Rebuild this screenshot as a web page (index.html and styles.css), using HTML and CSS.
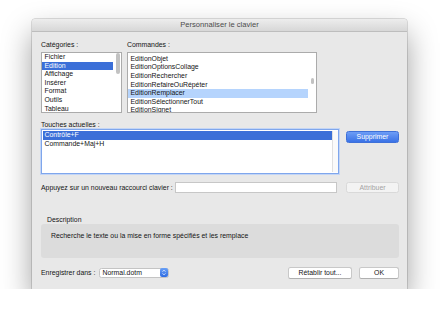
FILE: index.html
```html
<!DOCTYPE html>
<html lang="fr">
<head>
    <meta charset="UTF-8">
    <title>Personnaliser le clavier</title>
    <link rel="stylesheet" href="styles.css">
</head>
<body>
<div class="dialog">
    <div class="titlebar">Personnaliser le clavier</div>
    <div class="content">
        <div class="lists">
            <div class="col-cat">
                <div class="label">Catégories :</div>
                <div class="listbox">
                    <ul class="items">
                        <li>Fichier</li>
                        <li class="sel">Edition</li>
                        <li>Affichage</li>
                        <li>Insérer</li>
                        <li>Format</li>
                        <li>Outils</li>
                        <li>Tableau</li>
                    </ul>
                    <div class="track"><div class="thumb thumb-cat"></div></div>
                </div>
            </div>
            <div class="col-cmd">
                <div class="label">Commandes :</div>
                <div class="listbox">
                    <ul class="items items-cmd">
                        <li class="partial"><span>EditionLien</span></li>
                        <li>EditionObjet</li>
                        <li>EditionOptionsCollage</li>
                        <li>EditionRechercher</li>
                        <li>EditionRefaireOuRépéter</li>
                        <li class="hl">EditionRemplacer</li>
                        <li>EditionSélectionnerTout</li>
                        <li>EditionSignet</li>
                    </ul>
                    <div class="track"><div class="thumb thumb-cmd"></div></div>
                </div>
            </div>
        </div>

        <div class="label keys-label">Touches actuelles :</div>
        <div class="keys-row">
            <div class="keybox">
                <ul class="items">
                    <li class="sel">Contrôle+F</li>
                    <li>Commande+Maj+H</li>
                </ul>
                <div class="keytrack"></div>
            </div>
            <button class="btn btn-primary btn-side">Supprimer</button>
        </div>

        <div class="shortcut-row">
            <div class="shortcut-label">Appuyez sur un nouveau raccourci clavier :</div>
            <input class="field" type="text">
            <button class="btn btn-disabled btn-attr">Attribuer</button>
        </div>

        <div class="desc-label">Description</div>
        <div class="desc-box">Recherche le texte ou la mise en forme spécifiés et les remplace</div>

        <div class="footer">
            <div class="save-label">Enregistrer dans :</div>
            <div class="popup">
                <span class="popup-text">Normal.dotm</span>
                <svg class="stepper" width="8" height="9" viewBox="0 0 8 9">
                    <defs>
                        <linearGradient id="stepBlue" x1="0" y1="0" x2="0" y2="1">
                            <stop offset="0" stop-color="#69a0f7"/>
                            <stop offset="1" stop-color="#2f6ce2"/>
                        </linearGradient>
                    </defs>
                    <rect x="0" y="0" width="8" height="9" rx="2" fill="url(#stepBlue)"/>
                    <path d="M2.6 3.6 L4 2.2 L5.4 3.6 M2.6 5.4 L4 6.8 L5.4 5.4" fill="none" stroke="#fff" stroke-width="0.8"/>
                </svg>
            </div>
            <button class="btn btn-plain btn-reset">Rétablir tout...</button>
            <button class="btn btn-plain btn-ok">OK</button>
        </div>
    </div>
</div>
</body>
</html>
```

FILE: styles.css
```css
body {
    margin: 0;
    background: #fff;
    font-family: "Liberation Sans", Arial, sans-serif;
    font-size: 6.9px;
    color: #141414;
}
.dialog {
    width: 375px;
    height: 270px;
    margin: 19px 0 0 32px;
    background: #e8e8e8;
    border-radius: 3px 3px 0 0;
    box-shadow: 0 0 0 0.5px rgba(0, 0, 0, 0.25), 0 14px 30px rgba(0, 0, 0, 0.38);
}
.titlebar {
    height: 12px;
    line-height: 12px;
    text-align: center;
    font-size: 7.6px;
    color: #4b4b4b;
    background: linear-gradient(#ededed, #d7d7d7);
    border-bottom: 1px solid #bdbdbd;
    border-radius: 3px 3px 0 0;
}
.content {
    padding: 8px 8px 0 9px;
}
.lists {
    display: flex;
    gap: 5px;
}
.col-cat {
    width: 81px;
}
.col-cmd {
    width: 190px;
}
.label {
    height: 9px;
    line-height: 9px;
    margin-bottom: 3px;
    white-space: nowrap;
}
.listbox {
    height: 61px;
    box-sizing: border-box;
    border: 1px solid #ababab;
    background: #fff;
    display: flex;
    overflow: hidden;
}
.items {
    flex: 1;
    list-style: none;
    margin: 0;
    padding: 0;
}
.items li {
    height: 8.6px;
    line-height: 8.6px;
    padding-left: 2.5px;
    white-space: nowrap;
}
.items li.sel {
    background: #3b6fd8;
    color: #fff;
}
.items li.hl {
    background: #b5d4fd;
}
/* list is scrolled: only the bottom of the first row shows */
.items li.partial {
    height: 1.9px;
    overflow: hidden;
    position: relative;
}
.items li.partial span {
    position: absolute;
    left: 2.5px;
    bottom: 0;
    line-height: 8.6px;
}
.track {
    width: 8px;
}
.thumb {
    background: #c2c2c2;
    border-radius: 2px;
}
.thumb-cat {
    width: 4px;
    height: 21px;
    margin: 0 0 0 2.5px;
}
.thumb-cmd {
    width: 3px;
    height: 6px;
    margin: 25px 0 0 3px;
}
.keys-label {
    margin-top: 7px;
    margin-bottom: 0;
}
.keys-row {
    display: flex;
}
.keybox {
    width: 298px;
    height: 45px;
    box-sizing: border-box;
    border: 1px solid #7fa6ec;
    box-shadow: 0 0 0 1px #c3d5f5;
    background: #fff;
    display: flex;
    padding: 1px 0 1px 1px;
}
.keybox .items li {
    padding-left: 1.5px;
}
.keytrack {
    width: 6px;
    box-sizing: border-box;
    border-left: 1px solid #e0e0e0;
    background: #fafafa;
}
.btn {
    box-sizing: border-box;
    font: inherit;
    padding: 0;
    border-radius: 2.5px;
    text-align: center;
    white-space: nowrap;
}
.btn-primary {
    background: linear-gradient(#6d9df6, #3a72e6);
    border: 1px solid #3e70d8;
    color: #fff;
}
.btn-plain {
    background: #fff;
    border: 1px solid #c8c8c8;
    border-bottom-color: #b0b0b0;
    color: #141414;
}
.btn-disabled {
    background: #f3f3f3;
    border: 1px solid #d9d9d9;
    color: #a3a3a3;
}
.btn-side {
    width: 53px;
    height: 12px;
    margin: 1.5px 0 0 7px;
}
.shortcut-row {
    display: flex;
    align-items: center;
    height: 10.5px;
    margin-top: 8px;
}
.shortcut-label {
    width: 134px;
    white-space: nowrap;
}
.field {
    width: 162px;
    height: 10.5px;
    box-sizing: border-box;
    margin: 0;
    padding: 0 2px;
    border: 1px solid #c7c7c7;
    background: #fff;
    font: inherit;
    outline: none;
}
.btn-attr {
    width: 53px;
    height: 10.5px;
    margin-left: 9px;
}
.desc-label {
    height: 9px;
    line-height: 9px;
    margin-top: 22.5px;
    padding-left: 6px;
}
.desc-box {
    height: 34px;
    box-sizing: border-box;
    padding: 6.5px 10px 0;
    line-height: 9px;
    background: #dcdcdc;
    border-radius: 3px;
}
.footer {
    display: flex;
    align-items: center;
    height: 11.5px;
    margin-top: 9px;
}
.save-label {
    width: 58px;
    white-space: nowrap;
}
.popup {
    width: 70px;
    height: 10px;
    box-sizing: border-box;
    display: flex;
    align-items: center;
    background: #fff;
    border: 1px solid #c4c4c4;
    border-radius: 2.5px;
}
.popup-text {
    flex: 1;
    padding-left: 2.5px;
}
.stepper {
    display: block;
    margin-right: 0.5px;
}
.btn-reset {
    width: 64px;
    height: 11.5px;
    margin-left: auto;
}
.btn-ok {
    width: 40px;
    height: 11.5px;
    margin-left: 7px;
}
```
